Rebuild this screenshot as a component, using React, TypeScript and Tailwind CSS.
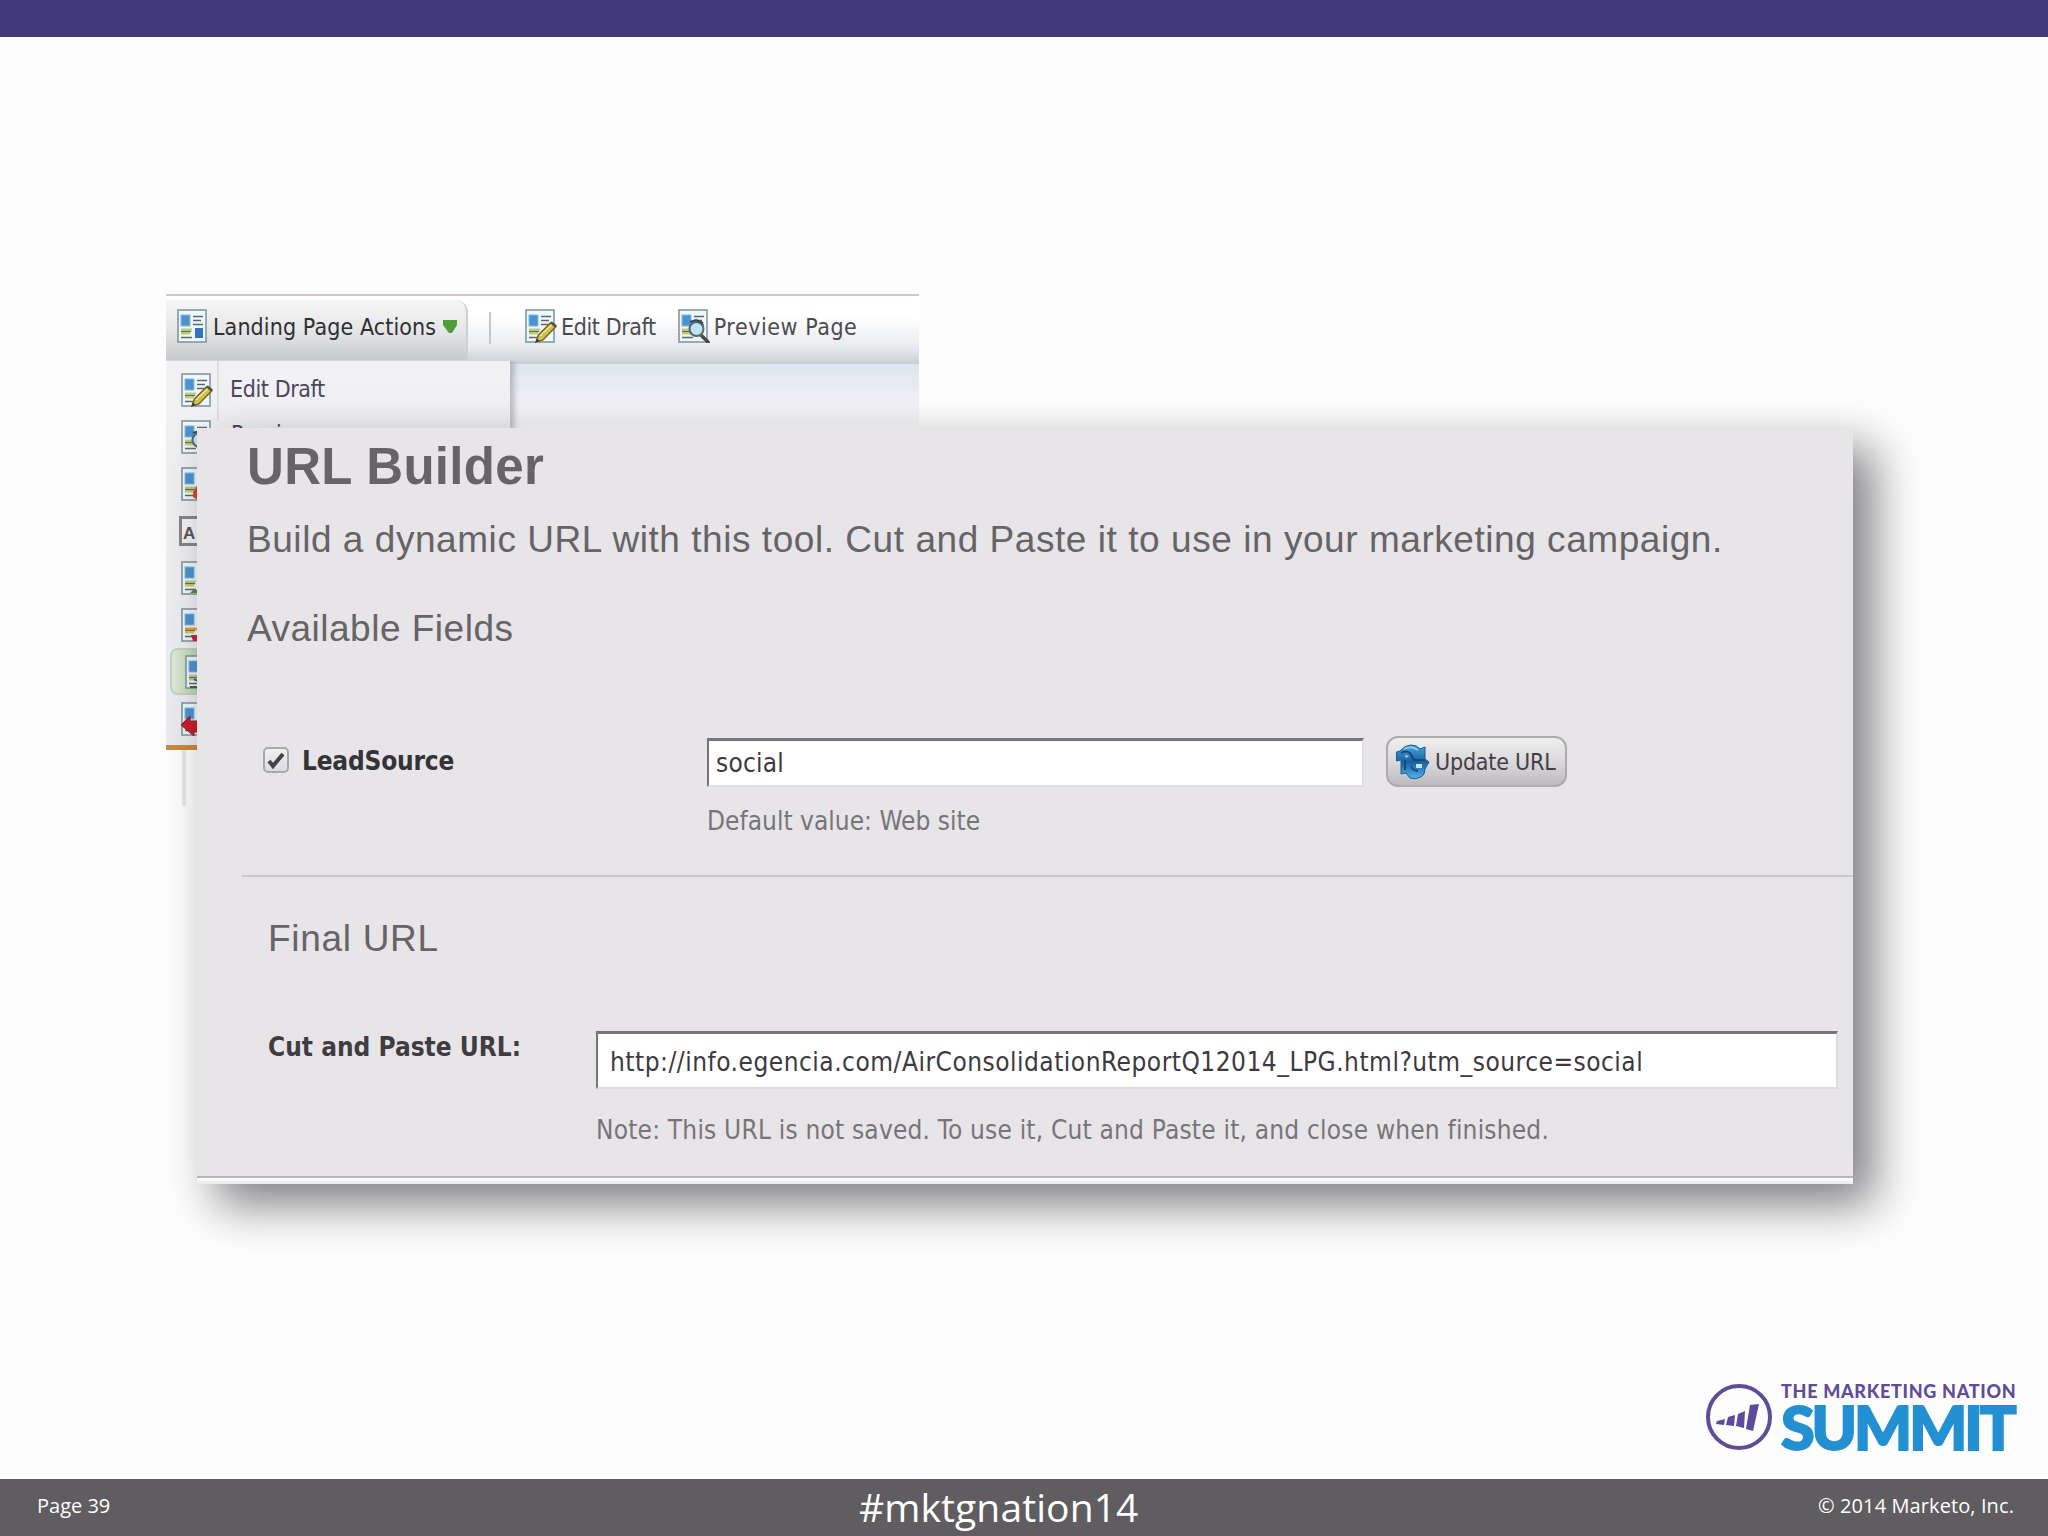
import React from 'react';
import clsx from 'clsx';

type PageIconKind = 'layout' | 'edit' | 'preview' | 'remove' | 'approve' | 'discard' | 'url' | 'delete';

const menuIcons: { kind: PageIconKind | 'text'; active?: boolean }[] = [
  { kind: 'preview' },
  { kind: 'remove' },
  { kind: 'text' },
  { kind: 'approve' },
  { kind: 'discard' },
  { kind: 'url', active: true },
  { kind: 'delete' },
];

function PageIcon({ kind, className }: { kind: PageIconKind; className?: string }) {
  return (
    <svg viewBox="0 0 32 34" className={clsx('w-8 h-[34px] shrink-0', className)} fill="none">
      <rect x="1" y="1" width="28" height="32" fill="#eef7fa" stroke="#8396a0" strokeWidth="1.6" />
      <rect x="4" y="6" width="9" height="11" fill="#4b93cf" />
      <rect x="4" y="6" width="9" height="11" stroke="#86b9df" strokeWidth="1" />
      <path d="M16 7.5h10M16 11.5h8M16 15.5h10" stroke="#66646c" strokeWidth="1.6" />
      <path d="M4 20.5h11M4 24.5h9" stroke="#c3cf62" strokeWidth="2" />
      <path d="M4 22.5h10M4 28.5h11" stroke="#5f6a60" strokeWidth="1.4" />
      {kind === 'layout' && <rect x="18" y="19" width="8" height="10" fill="#2f74c0" />}
      {kind === 'edit' && (
        <>
          <path d="M11 33l2.500-7L26 13.500l5 4L18 31z" fill="#d3c246" stroke="#6b6330" strokeWidth="1.4" />
          <path d="M15 27L27.500 15" stroke="#f1e994" strokeWidth="1.4" />
          <path d="M26 13.500l5 4" stroke="#54523f" strokeWidth="2.600" />
          <path d="M10.500 33.500l1.500-4 2.500 2.500z" fill="#3f3b2a" />
        </>
      )}
      {kind === 'preview' && (
        <>
          <path d="M23 26l7 7" stroke="#4d4a46" strokeWidth="3.600" strokeLinecap="round" />
          <circle cx="18.500" cy="20" r="7" fill="#bfe4f1" stroke="#56666f" strokeWidth="2" />
          <path d="M12 13l6-2 7 3" stroke="#37475a" strokeWidth="2" />
        </>
      )}
      {kind === 'remove' && <path d="M12 25l5-8v16l-5-3z" fill="#d9482b" />}
      {kind === 'approve' && <path d="M12 29h4l3-5v8H9z" fill="#4f8f3c" />}
      {kind === 'discard' && (
        <>
          <path d="M4 21h12" stroke="#e8993a" strokeWidth="2.500" />
          <path d="M10 27h8v6h-6z" fill="#c8283a" />
        </>
      )}
      {kind === 'url' && <path d="M9 24l5 3v5H5" stroke="#4a5b57" strokeWidth="1.800" />}
      {kind === 'delete' && <path d="M0 23l9-9v5h10v11h-6v4z" fill="#c4202c" stroke="#8f1a20" />}
    </svg>
  );
}

function TextIcon() {
  return (
    <svg viewBox="0 0 30 30" className="w-[30px] h-[30px] shrink-0 -ml-[2px]">
      <rect x="1.500" y="1.500" width="30" height="27" fill="#f3f3f4" stroke="#85868a" strokeWidth="3" />
      <text x="4" y="23" fontSize="17" fontWeight="bold" fontFamily="Liberation Sans, sans-serif" fill="#55575b">
        A
      </text>
    </svg>
  );
}

function RefreshIcon() {
  return (
    <svg viewBox="0 0 34 36" className="w-[34px] h-9 shrink-0">
      <defs>
        <linearGradient id="refresh" x1="0" y1="0" x2="0" y2="1">
          <stop offset="0" stopColor="#4da5e0" />
          <stop offset="0.5" stopColor="#17609f" />
          <stop offset="1" stopColor="#55b4ee" />
        </linearGradient>
      </defs>
      <path
        d="M0.500 8L4 7Q9 1 15 1t9 4l5-2v12l4 3-4 7q0 6-4 8-6 3-11 1l-4-5-5 1V16l-4.500 1z"
        fill="url(#refresh)"
        stroke="#1b5a92"
      />
      <path d="M8 5q7-4 14 1" stroke="#86c8f2" strokeWidth="2" fill="none" />
      <path d="M5 9q5-3 9 0l4 7h11" stroke="#0f4a80" strokeWidth="2" fill="none" />
      <path d="M9 16v10M15 22q2 5 7 5" stroke="#0f4a80" strokeWidth="2" fill="none" />
      <path d="M20 20h6v4h-6z" fill="#d3dde4" />
      <path d="M9 11l4 1-3 2z" fill="#c3d6e3" />
    </svg>
  );
}

function ToolbarButton({ kind, label, className }: { kind: PageIconKind; label: string; className?: string }) {
  return (
    <div className="flex items-start">
      <PageIcon kind={kind} />
      <span className={clsx('ml-1 leading-9 text-[23px] text-[#4b4b50] whitespace-nowrap', className)}>{label}</span>
    </div>
  );
}

// Landing page designer with its actions menu open
function DesignerWindow() {
  return (
    <div className="w-[753px] font-['DejaVu_Sans_Condensed','DejaVu_Sans',sans-serif] [font-stretch:condensed]">
      <div className="h-[70px] flex border-t-2 border-[#cfcac9] bg-linear-to-b from-white from-30% via-[#e9ebee] via-75% to-[#c9ced3]">
        <div className="mt-1 w-[302px] h-[60px] pt-[9px] pl-[11px] flex items-start rounded-tr-xl border-r-2 border-[#d0d2d2] bg-linear-to-b from-[#f6f6f7] via-[#e6e7e8] to-[#c8c9cc]">
          <PageIcon kind="layout" />
          <span className="ml-1 leading-9 text-[23px] tracking-[0.1px] text-[#2f2f33] whitespace-nowrap">Landing Page Actions</span>
          <svg viewBox="0 0 16 15" className="w-4 h-[15px] mt-2.5 ml-1.5 shrink-0">
            <path d="M1 1h14v5l-5 8H7L1 6z" fill="#4b9e3a" />
          </svg>
        </div>
        <div className="mt-4 ml-[21px] w-[2px] h-8 bg-[#c6c9cc]" />
        <div className="mt-[13px] ml-[34px] flex gap-[22px]">
          <ToolbarButton kind="edit" label="Edit Draft" className="tracking-[-0.4px]" />
          <ToolbarButton kind="preview" label="Preview Page" className="tracking-[0.55px]" />
        </div>
      </div>
      <div className="flex items-start">
        <div className="relative w-[344px] -mt-[3px] h-[389px] border-b-[5px] border-[#c98a3c] bg-linear-to-b from-[#f2f2f4] to-[#ebebef] shadow-[4px_0_6px_rgba(80,80,100,0.35)] [clip-path:inset(0_-12px_0_0)]">
          <div className="flex pl-[15px] pt-3">
            <PageIcon kind="edit" />
            <div className="ml-1 -mt-3 w-[2px] h-[60px] bg-[#dfdfe3]" />
            <span className="ml-[11px] leading-8 text-[23px] tracking-[-0.4px] text-[#4c4860]">Edit Draft</span>
          </div>
          <div className="-mt-2">
            {menuIcons.map(({ kind, active }) => (
              <div
                key={kind}
                className={clsx(
                  'h-[47px] pl-[15px] flex items-center',
                  active && 'ml-1 pl-[11px] rounded-l-lg border-2 border-[#c5cfc3] bg-linear-to-r from-[#e0eadc] from-0% to-[#a5d296] to-10%',
                )}
              >
                {kind === 'text' ? <TextIcon /> : <PageIcon kind={kind} className={active ? '-ml-0.5' : ''} />}
                {kind === 'preview' && <span className="ml-[18px] mb-1.5 leading-[34px] text-[23px] text-[#4c4860]">Preview</span>}
              </div>
            ))}
          </div>
        </div>
        <div className="flex-1 h-[61px] bg-linear-to-b from-[#dfe4ee] via-[#eeeff4] via-50% to-[#f8f6f9]" />
      </div>
      <div className="ml-4 w-[4px] h-14 bg-[#e6e6e8]" />
    </div>
  );
}

function UrlBuilder() {
  return (
    <div className="absolute left-[197px] top-[428px] w-[1656px] h-[756px] bg-[#e7e5e8] shadow-[20px_20px_44px_rgba(20,16,24,0.54)] font-['DejaVu_Sans_Condensed','DejaVu_Sans',sans-serif] [font-stretch:condensed] whitespace-nowrap">
      <div className="pt-[13px] pl-[50px] font-['Liberation_Sans',Arial,sans-serif] text-[#666467]">
        <h1 className="text-[51px] leading-[52px] font-bold tracking-[0.3px]">URL Builder</h1>
        <p className="mt-[25px] text-[37px] leading-11 tracking-[0.55px]">
          Build a dynamic URL with this tool. Cut and Paste it to use in your marketing campaign.
        </p>
        <h2 className="mt-[45px] text-[37px] leading-11 tracking-[0.5px]">Available Fields</h2>
      </div>

      <div className="mt-[85px] pl-[66px] h-[51px] flex items-start">
        <div className="mt-[11px] w-[26px] h-[26px] rounded-[5px] border-2 border-[#a9a8ab] bg-linear-to-b from-[#f1f1f2] to-[#dcdcde] flex items-center justify-center">
          <svg viewBox="0 0 20 20" className="w-5 h-5">
            <path d="M3 11l4 5L17 4" stroke="#444347" strokeWidth="4" fill="none" />
          </svg>
        </div>
        <label className="ml-[13px] mt-[9px] w-[405px] text-[26px] leading-8 font-bold tracking-[-0.2px] text-[#343338]">LeadSource</label>
        <div className="mt-[2px] w-[657px] h-[49px] border-t-[3px] border-l-2 border-r-2 border-b-2 border-t-[#77757a] border-l-[#77757a] border-r-[#e0dfe1] border-b-[#e0dfe1] bg-white pl-[7px] text-[26px] leading-[44px] tracking-[0.2px] text-[#3c3a40]">
          social
        </div>
        <button className="ml-[22px] w-[181px] h-[51px] rounded-xl border-2 border-[#adabae] bg-linear-to-b from-[#f0eff0] via-[#dbd9db] to-[#bdbbbd] flex items-center pl-2">
          <RefreshIcon />
          <span className="ml-[5px] text-[23px] leading-8 tracking-[-0.2px] text-[#414047]">Update URL</span>
        </button>
      </div>
      <p className="mt-[18px] ml-[510px] text-[26px] leading-8 tracking-[0.02px] text-[#77757a]">Default value: Web site</p>

      <div className="mt-[38px] ml-[45px] h-[2px] bg-[#cac8cb]" />

      <h2 className="mt-[40px] ml-[71px] text-[37px] leading-11 tracking-[0.7px] font-['Liberation_Sans',Arial,sans-serif] text-[#666467]">Final URL</h2>
      <div className="mt-[70px] ml-[71px] flex items-start">
        <label className="w-[328px] text-[26px] leading-8 font-bold text-[#3f3d42]">Cut and Paste URL:</label>
        <div className="w-[1242px] h-[58px] border-t-[3px] border-l-2 border-r-2 border-b-2 border-t-[#77757a] border-l-[#77757a] border-r-[#dcdbdd] border-b-[#dcdbdd] bg-white pl-3 text-[26px] leading-[56px] tracking-[0.5px] text-[#3c3a40]">
          http://info.egencia.com/AirConsolidationReportQ12014_LPG.html?utm_source=social
        </div>
      </div>
      <p className="mt-[25px] ml-[399px] text-[26px] leading-8 tracking-[0.2px] text-[#77757a]">
        Note: This URL is not saved. To use it, Cut and Paste it, and close when finished.
      </p>
      <div className="mt-[30px] h-2 border-t-2 border-[#b8b6b9] bg-linear-to-b from-white to-[#e9e8ea]" />
    </div>
  );
}

function SummitLogo() {
  return (
    <div className="flex items-start gap-[9px] font-['Lato',sans-serif] whitespace-nowrap">
      <svg viewBox="0 0 66 68" className="w-[66px] h-[68px]">
        <circle cx="33" cy="33" r="31" fill="none" stroke="#5f4d97" strokeWidth="4" />
        <path d="M11 37l8-2-1 6-8-1zM22 33l7-2-1 11-8-1zM32 30l7-3-1 17-8-2zM44 21l9-1-6 27-7-2z" fill="#5c4a9c" />
      </svg>
      <div className="w-[236px]">
        <div className="text-[18px] leading-[15px] font-black tracking-[0.7px] text-[#5f4d97]">THE MARKETING NATION</div>
        <div className="text-[61px] leading-[55px] font-black tracking-[-3px] text-[#2390d2] [-webkit-text-stroke:2px_#2390d2]">SUMMIT</div>
      </div>
    </div>
  );
}

export default function App() {
  return (
    <div className="relative w-[2048px] h-[1536px] flex flex-col bg-[#fdfdfd] overflow-hidden">
      <div className="h-[37px] bg-[#42397c]" />
      <main className="flex-1 flex flex-col pt-[257px] pl-[166px]">
        <DesignerWindow />
        <UrlBuilder />
        <div className="mt-auto mb-[25px] self-end mr-[31px]">
          <SummitLogo />
        </div>
      </main>
      <footer className="h-[57px] bg-[#5f5d60] text-white font-['Open_Sans',sans-serif] flex pl-[37px] pr-[34px] leading-[53px] text-[20px] whitespace-nowrap">
        <span className="w-[822px]">Page 39</span>
        <span className="text-[39px] leading-[55px] tracking-[0.1px]">#mktgnation14</span>
        <span className="ml-auto tracking-[0.1px]">© 2014 Marketo, Inc.</span>
      </footer>
    </div>
  );
}
